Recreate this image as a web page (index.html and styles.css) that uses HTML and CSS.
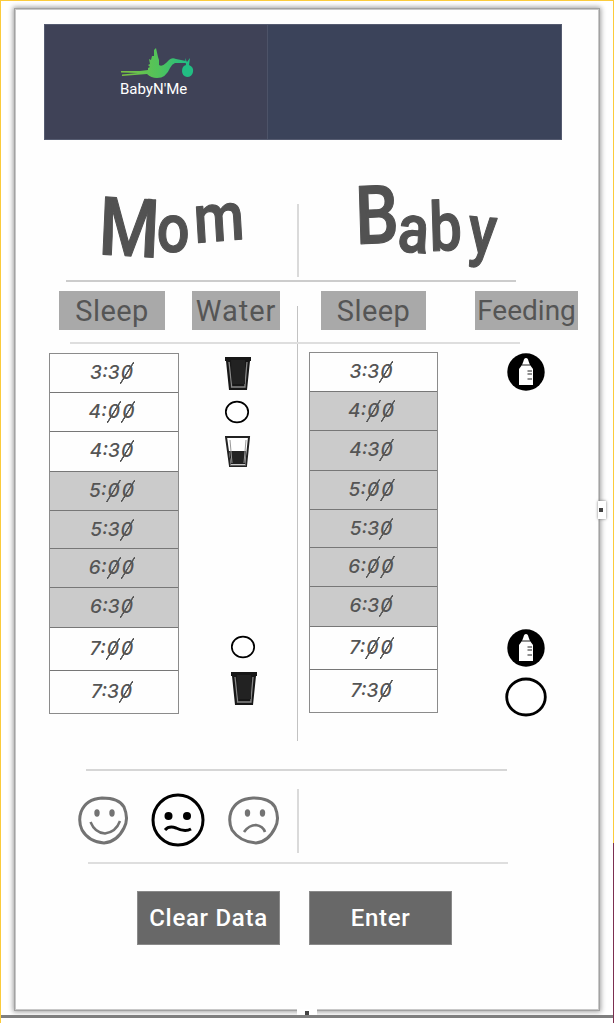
FILE: index.html
```html
<!DOCTYPE html>
<html lang="en">
<head>
<meta charset="utf-8">
<title>BabyN'Me</title>
<link rel="stylesheet" href="styles.css">
</head>
<body>
<svg width="0" height="0" class="symbols">
  <symbol id="glass-full" viewBox="0 0 26 33"><path d="M0 0H26V4H25L22 33H4L1 4H0Z" fill="#171717"/><path d="M4 5L6.5 28V30H20V28L22 5" fill="none" stroke="#888" stroke-width="1.3"/><path d="M6 3H20V27H7Z" fill="#222"/></symbol>
  <symbol id="glass-half" viewBox="0 0 26 33"><path d="M1 1H24L21 30H5Z" fill="#fff" stroke="#222" stroke-width="2"/><path d="M4 15H21L20 28H6Z" fill="#222"/><path d="M5 4L7 27M21 4L19 27M5 29H21" fill="none" stroke="#999" stroke-width="1"/></symbol>
  <symbol id="dot" viewBox="0 0 26 26"><ellipse cx="13" cy="13" rx="11.2" ry="10.3" fill="#fff" stroke="#000" stroke-width="1.7"/></symbol>
  <symbol id="bottle" viewBox="0 0 38 38"><circle cx="19" cy="19" r="18.7" fill="#000"/><path d="M19 5Q21 5 21.5 8L23 12L26 16V32H12V16L15 12L16.500 8Q17 5 19 5Z" fill="#fff"/><path d="M15 12H23M20.500 18H25M20.500 21H25M20.500 26H25" stroke="#222" stroke-width="1"/></symbol>
</svg>
<main class="screen">
  <section class="paper">
    <header class="banner">
      <div class="brand">
        <svg class="stork" width="76" height="32" viewBox="0 0 76 32">
          <defs><linearGradient id="g"><stop offset="0" stop-color="#7cc142"/><stop offset=".6" stop-color="#4fc35c"/><stop offset="1" stop-color="#22bd83"/></linearGradient></defs>
          <path d="M1 23H20L28 22L28 20L30 19L28 17L30 16L29 11L31 12L32 8L34 8L34 2L36 0L38 9L39 12L39 17Q42 19 46 15L49 12Q52 9 56 11L66 13V15L55 15Q52 16 50 20Q46 30 37 30Q31 30 27 26L2 28V26.500L18 25L1 24.500Z" fill="url(#g)"/>
          <path d="M65 10L67 14L70 10L69 17Q74 19 73 24Q72 29 67 29Q62 28 62 23Q62 18 66 17Z" fill="#22bd83"/>
        </svg>
        <span class="brand-name">BabyN'Me</span>
      </div>
    </header>

    <div class="titles">
      <svg class="title mom" width="150" height="90" viewBox="0 0 150 90"><text transform="scale(.85 1)" x="0 69 114" y="73 71 62" rotate="3 0 -4">M<tspan class="small">om</tspan></text></svg>
      <i class="vline"></i>
      <svg class="title" width="150" height="100" viewBox="0 0 150 100"><text transform="scale(.85 1)" x="0 48 87 131" y="62 69 69 70" rotate="-2 4 -2 4">B<tspan class="small">aby</tspan></text></svg>
    </div>
    <hr class="rule rule-title">

    <section class="log">
      <i class="spine"></i>
      <div class="labels"><b>Sleep</b><b>Water</b><b>Sleep</b><b>Feeding</b></div>
      <hr class="rule rule-labels">
      <ol class="times mom-times">
        <li>3:3<s>0</s></li><li>4:<s>0</s><s>0</s></li><li>4:3<s>0</s></li><li class="on">5:<s>0</s><s>0</s></li><li class="on">5:3<s>0</s></li><li class="on">6:<s>0</s><s>0</s></li><li class="on">6:3<s>0</s></li><li>7:<s>0</s><s>0</s></li><li>7:3<s>0</s></li>
      </ol>
      <div class="water">
        <svg width="26" height="33"><use href="#glass-full"/></svg>
        <svg class="w2" width="26" height="26"><use href="#dot"/></svg>
        <svg class="w3" width="26" height="33"><use href="#glass-half"/></svg>
        <svg class="w4" width="26" height="26"><use href="#dot"/></svg>
        <svg class="w5" width="26" height="33"><use href="#glass-full"/></svg>
      </div>
      <ol class="times baby-times">
        <li>3:3<s>0</s></li><li class="on">4:<s>0</s><s>0</s></li><li class="on">4:3<s>0</s></li><li class="on">5:<s>0</s><s>0</s></li><li class="on">5:3<s>0</s></li><li class="on">6:<s>0</s><s>0</s></li><li class="on">6:3<s>0</s></li><li>7:<s>0</s><s>0</s></li><li>7:3<s>0</s></li>
      </ol>
      <div class="feeding">
        <svg width="38" height="38"><use href="#bottle"/></svg>
        <svg class="f2" width="38" height="38"><use href="#bottle"/></svg>
        <svg class="f3" width="42" height="40" viewBox="0 0 42 40"><ellipse cx="21" cy="20" rx="19.300" ry="18" fill="#fff" stroke="#000" stroke-width="2.800"/></svg>
      </div>
    </section>

    <hr class="rule rule-mood">
    <div class="moods">
      <svg width="50" height="50" viewBox="0 0 50 50" fill="none" stroke="#737373" stroke-width="3"><path d="M3 16Q8 3 24 2Q41 2 46 11Q51 23 46 32Q39 46 26 47Q11 46 4 34Q0 25 3 16Z"/><path d="M12.500 26Q17 37 27 37.500Q38 36 42 25" stroke-width="2.500"/><g fill="#737373" stroke="none"><ellipse cx="19" cy="17" rx="2.700" ry="3.700"/><ellipse cx="34" cy="17" rx="2.700" ry="3.700"/></g></svg>
      <svg class="selected" width="54" height="54" viewBox="0 0 54 54" fill="none" stroke="#000" stroke-width="3"><circle cx="27" cy="27" r="25"/><path d="M14 37Q18 32.500 25 35Q34 39.500 40 36" stroke-width="3"/><g fill="#000" stroke="none"><circle cx="17.500" cy="23" r="4"/><circle cx="36" cy="23" r="4"/></g></svg>
      <svg width="51" height="50" viewBox="0 0 51 50" fill="none" stroke="#737373" stroke-width="3"><path d="M3 16Q8 3 25 2Q42 2 47 11Q52 23 47 32Q40 46 28 47Q12 46 4 34Q0 25 3 16Z"/><path d="M16 36Q21 29 28 29Q35 30 37 36" stroke-width="2.700"/><g fill="#737373" stroke="none"><ellipse cx="19.500" cy="17" rx="2.700" ry="3.700"/><ellipse cx="34.500" cy="17" rx="2.700" ry="3.700"/></g></svg>
      <i class="vline"></i>
    </div>
    <hr class="rule rule-actions">
    <div class="actions"><button type="button">Clear Data</button><button type="button">Enter</button></div>
  </section>
  <i class="handle handle-right"></i>
  <i class="handle handle-bottom"></i>
  <i class="edge-bottom"></i>
  <i class="edge-right"></i>
</main>
</body>
</html>
```
FILE: styles.css
```css
* { box-sizing: border-box; }
body { margin: 0; background: #fff; font-family: Roboto, "Noto Sans", sans-serif; color: #555; }
.symbols { position: absolute; }
.screen { position: relative; width: 614px; height: 1023px; border: 1px solid #fbcb3c; border-bottom: 0; padding: 9px 0 0 15px; }
.paper { width: 582px; height: 999px; background: #fefefe; box-shadow: 0 0 0 1px #c8c8c8, 0 0 0 2px #a2a2a2, 0 0 5px 3px #a0a0a0; display: flex; flex-direction: column; }
.banner { margin: 14px 0 0 28px; width: 518px; height: 116px; flex: none; background: linear-gradient(90deg, #3f4257 222px, #4d5368 222px, #4d5368 223px, #3b435a 223px); border: 1px solid #555b70; }
.brand { display: flex; flex-direction: column; width: 76px; margin: 23px 0 0 75px; }
.brand-name { color: #fff; font-size: 15px; line-height: 19px; white-space: nowrap; }
.stork { display: block; }

.titles { flex: none; height: 140px; display: flex; align-items: flex-start; }
.title { flex: none; display: block; overflow: visible; margin: 42px 0 0 57px; font-size: 81px; font-weight: 500; fill: #525252; stroke: #525252; stroke-width: 1.2px; stroke-linejoin: round; }
.title .small { font-size: 68px; }
.title.mom { margin: 41px 0 0 82px; }
.titles .vline { margin: 64px 0 0 49px; height: 73px; }
.vline { flex: none; width: 2px; background: #dadada; }
.titles .title:last-child { margin-left: 57px; }

.rule { flex: none; height: 2px; margin: 0; border: 0; background: #ccc; }
.rule-title { width: 450px; margin-left: 50px; }

.log { flex: none; height: 459px; display: grid; grid-template-columns: 33px 130px 47px 83px 129px 67px 1fr; grid-template-rows: 60px 2px 9px 362px 26px; }
.spine { grid-area: 1 / 4 / 6 / 5; width: 1px; margin: 24px 0 0 71px; background: #c2c2c2; }
.labels { grid-area: 1 / 1 / 2 / 8; display: flex; padding: 9px 0 0 43px; }
.labels b { height: 39px; display: flex; align-items: center; justify-content: center; background: #a9a9a9; font-size: 29px; font-weight: 400; letter-spacing: .4px; }
.labels b:nth-child(1) { width: 106px; }
.labels b:nth-child(2) { width: 88px; margin-left: 27px; letter-spacing: 1px; }
.labels b:nth-child(3) { width: 105px; margin-left: 41px; }
.labels b:nth-child(4) { width: 103px; margin-left: 49px; font-size: 28px; letter-spacing: 0; }
.rule-labels { grid-area: 2 / 1 / 3 / 8; width: 450px; margin-left: 54px; background: #dedede; }

.times { list-style: none; margin: 0; padding: 0; display: grid; grid-template-rows: 38px 39px 40px 39px 38px 39px 40px 43px 1fr; border: 1px solid #8b8b8b; font: italic 500 19px Inter, sans-serif; }
.times li { padding-right: 4px; background: #fefefe; line-height: 38px; text-align: center; }
.times li:nth-child(n+8) { line-height: 41px; }
.times li + li { border-top: 1px solid #777; }
.times .on { background: #cbcbcb; }
/* zero drawn with a slash that overshoots the digit */
.times s { display: inline-block; text-decoration: none; line-height: 22px; padding: 0 1px; background: linear-gradient(122deg, transparent calc(50% - 1px), #5a5a5a calc(50% - .5px), #5a5a5a calc(50% + .5px), transparent calc(50% + 1px)); }
.mom-times { grid-area: 4 / 2; height: 361px; }
.baby-times { grid-area: 4 / 5; margin-top: -1px; height: 361px; }

.water { grid-area: 4 / 3 / 5 / 5; display: flex; flex-direction: column; margin: 4px 0 0 46px; }
.water svg, .feeding svg { flex: none; }
.w2 { margin-top: 9px; margin-left: -1px; }
.w3 { margin-top: 11px; }
.w4 { margin: 165px 0 0 5px; }
.w5 { margin: 12px 0 0 6px; }
.feeding { grid-area: 4 / 7; display: flex; flex-direction: column; margin: 0 0 0 2px; }
.feeding .f2 { margin-top: 238px; }
.feeding .f3 { margin: 10px 0 0 -2px; }

.rule-mood { width: 421px; margin: 28px 0 0 70px; background: #d6d6d6; }
.moods { flex: none; height: 91px; display: flex; align-items: flex-start; padding: 25px 0 0 62px; }
.moods .selected { margin: -3px 23px 0; }
.moods .vline { margin: -7px 0 0 18px; height: 64px; }
.rule-actions { width: 420px; margin: 0 0 0 72px; background: #dedede; }
.actions { display: flex; gap: 29px; margin: 27px 0 0 121px; }
.actions button { width: 143px; height: 54px; padding: 0; border: 1px solid #8a8a8a; background: #686868; color: #fff; font: 500 24px Roboto, sans-serif; letter-spacing: .7px; }

.handle { position: absolute; background: #fff; }
.handle::after { content: ""; position: absolute; width: 4px; height: 4px; background: #444; }
.handle-right { left: 597px; top: 500px; width: 8px; height: 18px; box-shadow: 0 0 3px #777; }
.handle-right::after { left: 1px; top: 7px; }
.handle-bottom { left: 296px; top: 1008px; width: 20px; height: 6px; }
.handle-bottom::after { left: 8px; top: 2px; }
.edge-bottom { position: absolute; left: 0; right: 0; top: 1014px; height: 8px; background: linear-gradient(#7f7f7f 3px, #fff 3px); }
.edge-right { position: absolute; right: -1px; top: 842px; width: 1px; height: 180px; background: #7b2f50; }
```
